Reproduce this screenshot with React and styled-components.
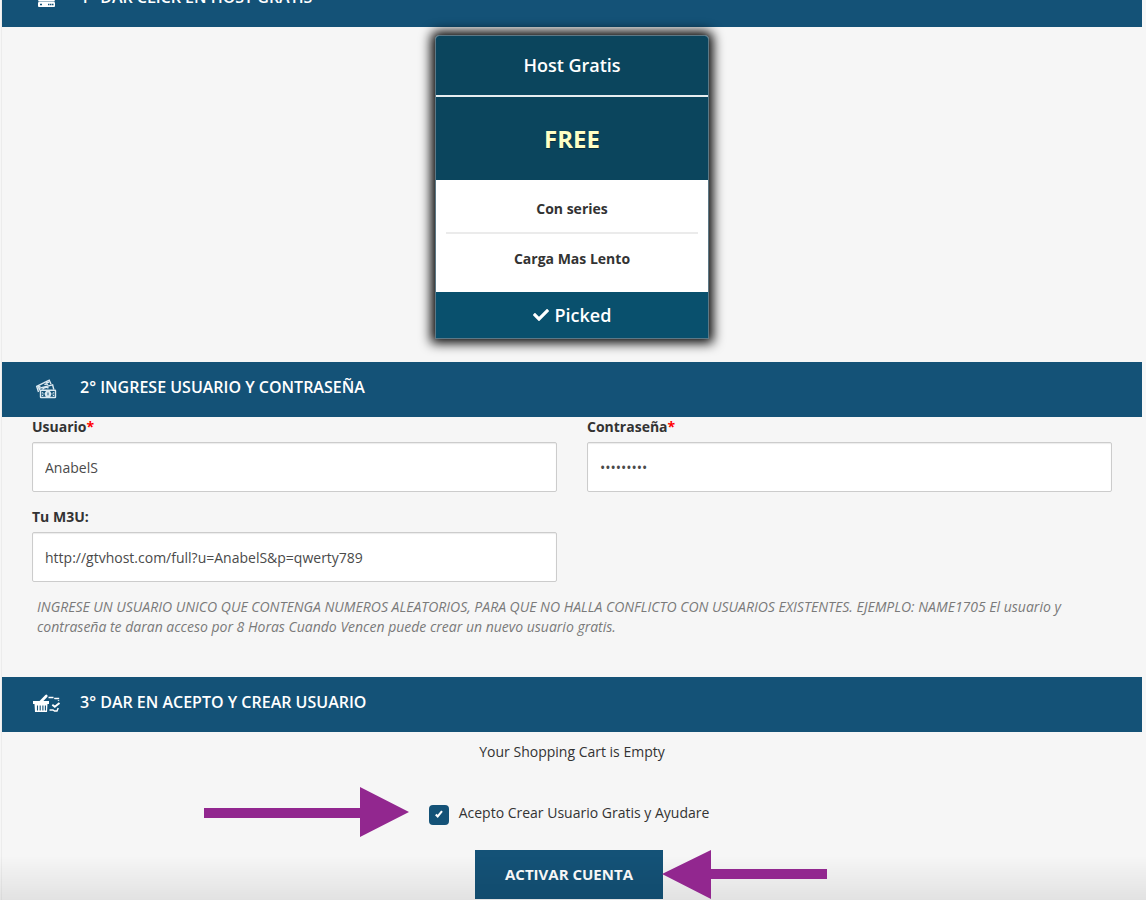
import React, { useState } from "react"
import styled, { createGlobalStyle } from "styled-components"
import { FaCheck } from "react-icons/fa"

const colors = {
  bar: "#145277",
  cardHead: "#0b455d",
  cardFoot: "#09506d",
  page: "#f6f6f6",
  text: "#333333",
  muted: "#7a7a7a",
  arrow: "#92278f",
}

const GlobalStyle = createGlobalStyle`
  * {
    box-sizing: border-box;
  }
  body {
    margin: 0;
    background: ${colors.page};
    color: ${colors.text};
    font-family: "Open Sans", "Noto Sans", sans-serif;
    font-size: 14px;
    line-height: 20px;
  }
`

/**
 * Styled Components
 */
const Viewport = styled.div`
  overflow: hidden;
  padding: 0 4px 0 1px;
`
// the page is shown scrolled, the first bar is half out of view
const Page = styled.form`
  margin-top: -28px;
  border-left: 1px solid #ececec;
`
const Bar = styled.h2`
  display: flex;
  align-items: flex-start;
  margin: 0;
  height: 55px;
  padding: 14px 30px 0;
  background: ${colors.bar};
  color: #ffffff;
  font-size: 16px;
  font-weight: 600;
  line-height: 22px;
  text-transform: uppercase;
`
const BarIcon = styled.span`
  display: flex;
  flex: none;
  width: 48px;
  padding-top: 1px;
`
const PlanArea = styled.div`
  display: flex;
  justify-content: center;
  padding: 8px 30px 23px;
`
const Plan = styled.div`
  width: 274px;
  border: 1px solid #5c7886;
  border-radius: 4px 4px 0 0;
  background: #ffffff;
  box-shadow: 0 0 12px 4px #000000;
  text-align: center;
`
const PlanName = styled.h3`
  margin: 0;
  padding: 17px 10px 18px;
  border-bottom: 2px solid #e6edf0;
  border-radius: 3px 3px 0 0;
  background: ${colors.cardHead};
  color: #ffffff;
  font-size: 18px;
  font-weight: 600;
  line-height: 24px;
`
const PlanPrice = styled.div`
  padding: 26px 10px 25px;
  background: ${colors.cardHead};
  color: #ffffc4;
  font-size: 24px;
  font-weight: 700;
  line-height: 32px;
  text-shadow: 0 1px 1px rgba(0, 0, 0, 0.4);
`
const Features = styled.ul`
  list-style: none;
  margin: 0;
  padding: 4px 10px 9px;
`
const Feature = styled.li`
  padding: 15px 0 13px;
  font-weight: 700;

  & + & {
    padding-bottom: 14px;
    border-top: 2px solid #ebebeb;
  }
`
const PickButton = styled.button`
  display: flex;
  align-items: center;
  justify-content: center;
  gap: 6px;
  width: 100%;
  height: 46px;
  border: 0;
  background: ${colors.cardFoot};
  color: #ffffff;
  font: 600 18px "Open Sans", "Noto Sans", sans-serif;
`
const Fields = styled.div`
  display: grid;
  grid-template-columns: 1fr 1fr;
  gap: 15px 30px;
  padding: 0 30px;
`
const FieldBox = styled.div`
  display: flex;
  flex-direction: column;
  gap: 5px;
`
const Label = styled.label`
  font-weight: 700;
`
const Required = styled.span`
  color: #ff0000;
`
const Input = styled.input`
  width: 100%;
  height: 50px;
  padding: 6px 12px;
  border: 1px solid #cccccc;
  border-radius: 2px;
  box-shadow: inset 0 1px 1px rgba(0, 0, 0, 0.08);
  background: #ffffff;
  color: #4a4a4a;
  font: 14px "Open Sans", "Noto Sans", sans-serif;
`
const Note = styled.p`
  margin: 0;
  padding: 15px 35px 40px;
  color: ${colors.muted};
  font-style: italic;
`
const Cart = styled.p`
  margin: 0;
  padding-top: 10px;
  text-align: center;
`
const Actions = styled.div`
  display: flex;
  flex-direction: column;
  align-items: center;
  gap: 25px;
  padding: 41px 6px 1px 0;
`
const Anchor = styled.div`
  position: relative;
`
const Accept = styled.label`
  display: flex;
  align-items: flex-start;
  gap: 10px;
`
const Checkbox = styled.span`
  display: grid;
  width: 20px;
  height: 20px;
  margin-top: 2px;
  border-radius: 4px;
  background: ${colors.bar};
  color: #ffffff;

  & > * {
    grid-area: 1 / 1;
    place-self: center;
  }
  input {
    appearance: none;
    width: 20px;
    height: 20px;
    margin: 0;
  }
  svg {
    pointer-events: none;
  }
`
const Submit = styled.button`
  height: 49px;
  padding: 0 30px 2px;
  border: 0;
  background: ${colors.bar};
  color: #ffffff;
  font: 700 15px "Open Sans", "Noto Sans", sans-serif;
  text-transform: uppercase;
`
const ArrowSvg = styled.svg`
  position: absolute;
  z-index: 2;
  fill: ${colors.arrow};
`
const ArrowRight = styled(ArrowSvg)`
  right: calc(100% + 20px);
  top: -16px;
`
const ArrowLeft = styled(ArrowSvg)`
  left: calc(100% - 1px);
  top: 0;
`
const BottomShade = styled.div`
  position: fixed;
  left: 0;
  right: 0;
  bottom: 0;
  height: 44px;
  background: linear-gradient(rgba(0, 0, 0, 0), rgba(0, 0, 0, 0.08));
  pointer-events: none;
  z-index: 1;
`

/**
 * Icons
 */
const ServerIcon = () => (
  <svg width="34" height="24" viewBox="0 0 34 24" fill="#fff" aria-hidden="true">
    <rect x="6" y="2" width="17" height="5" rx="1" />
    <rect x="6" y="9" width="17" height="5" rx="1" />
    <path d="M7 14h15l1 1H6z" opacity=".6" />
    <rect x="6" y="15" width="17" height="5" rx="1" />
    <path d="M8 17.500h2M16 17.500h1.500M18 17.500h1.500M20 17.500h1.500" stroke={colors.bar} strokeWidth="1.300" />
  </svg>
)

const MoneyIcon = () => (
  <svg width="34" height="24" viewBox="0 0 34 24" fill="none" stroke="#dce9f1" strokeWidth="1.400" aria-hidden="true">
    <path d="M6.500 15 4.700 9.300 17.200 3.200 19 7" />
    <path d="M7.500 12.500 6.500 9.800 8.500 9.500M14 6l3-1" />
    <path d="M7.800 13.500 7.300 11.200 20.600 7.800 21.800 12.500" />
    <path d="M10.500 12.500c1-1.800 4.500-3 6-1.200M12.500 7.800c1-1 2.500-1 3.500 0" />
    <rect x="8.500" y="13.200" width="15" height="7.300" rx=".5" fill={colors.bar} />
    <ellipse cx="16" cy="16.900" rx="2.400" ry="2.800" fill="#dce9f1" />
    <path d="M16 15.500v2.800" stroke={colors.bar} strokeWidth="1" />
    <path d="M10.500 15.200v3.800M21.500 15.200v3.800" strokeDasharray="1.300 1.200" />
    <path d="M11.500 16.900h1M19.500 16.900h1" />
  </svg>
)

const BasketIcon = () => (
  <svg width="34" height="24" viewBox="0 0 34 24" fill="none" stroke="#fff" aria-hidden="true">
    <path d="M1 9h16v3H1z" fill="#fff" stroke="none" />
    <path d="M2.500 12h13l-.5 8H3z" fill="#fff" stroke="none" />
    <path d="M5.500 13.500v5M8.200 13.500v5M10.900 13.500v5M13.400 13.500v5" stroke={colors.bar} strokeWidth="1.100" />
    <path d="M8 10.500 14.300 4" strokeWidth="2.600" strokeLinecap="round" />
    <path d="M16.500 5.500h5l1.500 1h3.500v2.500" strokeWidth="1.400" strokeDasharray="5 1" />
    <path d="M17.500 18h3.500l1.500 1h2.500l1.200-3" strokeWidth="1.400" />
    <path d="m20.300 12.800 2.500 2L27.500 11" strokeWidth="1.900" />
  </svg>
)

const TickIcon = () => (
  <svg width="10" height="12" viewBox="0 0 10 12" fill="none" stroke="#fff" strokeWidth="2.100" aria-hidden="true">
    <path d="m1.800 5.500 1.900 2L8 2.200" />
  </svg>
)

/**
 * Main Component
 */
const SectionBar = ({ icon, children }) => (
  <Bar>
    <BarIcon>{icon}</BarIcon>
    {children}
  </Bar>
)

const Field = ({ id, label, required, ...input }) => (
  <FieldBox>
    <Label htmlFor={id}>
      {label}
      {required && <Required>*</Required>}
    </Label>
    <Input id={id} {...input} />
  </FieldBox>
)

const App = () => {
  const [accepted, setAccepted] = useState(true)

  return (
    <Viewport>
      <GlobalStyle />
      <Page onSubmit={e => e.preventDefault()}>
        <SectionBar icon={<ServerIcon />}>1° Dar click en host gratis</SectionBar>
        <PlanArea>
          <Plan>
            <PlanName>Host Gratis</PlanName>
            <PlanPrice>FREE</PlanPrice>
            <Features>
              <Feature>Con series</Feature>
              <Feature>Carga Mas Lento</Feature>
            </Features>
            <PickButton type="button">
              <FaCheck size={16} />
              Picked
            </PickButton>
          </Plan>
        </PlanArea>

        <SectionBar icon={<MoneyIcon />}>2° Ingrese usuario y contraseña</SectionBar>
        <Fields>
          <Field id="user" label="Usuario" required defaultValue="AnabelS" />
          <Field id="pass" label="Contraseña" required type="password" defaultValue="qwerty789" />
          <Field id="m3u" label="Tu M3U:" defaultValue="http://gtvhost.com/full?u=AnabelS&p=qwerty789" />
        </Fields>
        <Note>
          INGRESE UN USUARIO UNICO QUE CONTENGA NUMEROS ALEATORIOS, PARA QUE NO HALLA CONFLICTO CON
          USUARIOS EXISTENTES. EJEMPLO: NAME1705 El usuario y contraseña te daran acceso por 8 Horas
          Cuando Vencen puede crear un nuevo usuario gratis.
        </Note>

        <SectionBar icon={<BasketIcon />}>3° Dar en acepto y crear usuario</SectionBar>
        <Cart>Your Shopping Cart is Empty</Cart>
        <Actions>
          <Anchor>
            <Accept>
              <Checkbox>
                <input type="checkbox" checked={accepted} onChange={e => setAccepted(e.target.checked)} />
                {accepted && <TickIcon />}
              </Checkbox>
              Acepto Crear Usuario Gratis y Ayudare
            </Accept>
            <ArrowRight width="205" height="50" viewBox="0 0 205 50" aria-hidden="true">
              <path d="M0 21h156V0l49 25-49 25V31H0z" />
            </ArrowRight>
          </Anchor>
          <Anchor>
            <Submit type="submit">Activar cuenta</Submit>
            <ArrowLeft width="165" height="49" viewBox="0 0 165 49" aria-hidden="true">
              <path d="M165 19H49V0L0 24l49 25V29h116z" />
            </ArrowLeft>
          </Anchor>
        </Actions>
      </Page>
      <BottomShade />
    </Viewport>
  )
}

export default App
